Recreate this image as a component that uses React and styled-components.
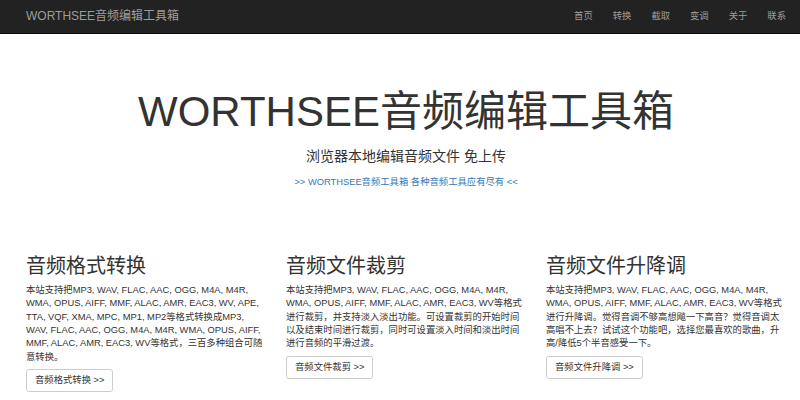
import React from "react";
import styled, { createGlobalStyle } from "styled-components";

const GlobalStyle = createGlobalStyle`
  html, body {
    margin: 0;
    padding: 0;
    background: #fff;
  }
  body {
    font-family: "Liberation Sans", "Noto Sans CJK SC", sans-serif;
    font-size: 9.33px;
    line-height: 13.33px;
    color: #333;
    overflow: hidden;
  }
  * {
    box-sizing: border-box;
  }
`;

const Container = styled.div`
  width: 780px;
  margin-left: 16px;
  padding: 0 10px;
`;

// top bar
const Navbar = styled.nav`
  height: 34px;
  background: #222;
  border-bottom: 1px solid #080808;
`;

const NavInner = styled(Container)`
  display: flex;
  justify-content: space-between;
  align-items: stretch;
  height: 100%;
`;

const Brand = styled.a`
  font-size: 12px;
  line-height: 13.33px;
  padding: 10px 0;
  color: #9d9d9d;
  text-decoration: none;
`;

const NavList = styled.ul`
  display: flex;
  list-style: none;
  margin: 0 -10px 0 0;
  padding: 0;
`;

const NavLink = styled.a`
  display: block;
  padding: 10px;
  line-height: 13.33px;
  color: #9d9d9d;
  text-decoration: none;
`;

// hero block
const Jumbotron = styled.header`
  padding: 42px 0 52px;
  text-align: center;
`;

const Title = styled.h1`
  margin: 13px 0 11px;
  font-size: 42px;
  line-height: 46px;
  font-weight: 400;
  color: #333;
`;

const Lead = styled.p`
  margin: 0 0 9px;
  font-size: 14px;
  line-height: 20px;
  font-weight: 400;
`;

const Tagline = styled.p`
  margin: 0 0 1px;
  font-size: 9.33px;
  line-height: 14px;

  a {
    color: #337ab7;
    text-decoration: none;
  }
`;

// feature columns
const Row = styled.div`
  display: grid;
  grid-template-columns: repeat(3, 1fr);
  margin: 0 -10px;
`;

const Column = styled.section`
  padding: 0 10px;
`;

const Heading = styled.h2`
  margin: 13px 0 7px;
  font-size: 20px;
  line-height: 22px;
  font-weight: 400;
`;

const Text = styled.p`
  margin: 0 0 5px;
`;

const Button = styled.a`
  display: inline-block;
  padding: 4px 8px;
  font-size: 9.33px;
  line-height: 13.33px;
  color: #333;
  background: #fff;
  border: 1px solid #ccc;
  border-radius: 2.67px;
  text-decoration: none;
`;

const navItems = ["首页", "转换", "截取", "变调", "关于", "联系"];

const features = [
  {
    title: "音频格式转换",
    text: "本站支持把MP3, WAV, FLAC, AAC, OGG, M4A, M4R, WMA, OPUS, AIFF, MMF, ALAC, AMR, EAC3, WV, APE, TTA, VQF, XMA, MPC, MP1, MP2等格式转换成MP3, WAV, FLAC, AAC, OGG, M4A, M4R, WMA, OPUS, AIFF, MMF, ALAC, AMR, EAC3, WV等格式，三百多种组合可随意转换。",
    button: "音频格式转换 >>",
  },
  {
    title: "音频文件裁剪",
    text: "本站支持把MP3, WAV, FLAC, AAC, OGG, M4A, M4R, WMA, OPUS, AIFF, MMF, ALAC, AMR, EAC3, WV等格式进行裁剪，并支持淡入淡出功能。可设置裁剪的开始时间以及结束时间进行裁剪，同时可设置淡入时间和淡出时间进行音频的平滑过渡。",
    button: "音频文件裁剪 >>",
  },
  {
    title: "音频文件升降调",
    text: "本站支持把MP3, WAV, FLAC, AAC, OGG, M4A, M4R, WMA, OPUS, AIFF, MMF, ALAC, AMR, EAC3, WV等格式进行升降调。觉得音调不够高想飚一下高音？觉得音调太高唱不上去？试试这个功能吧，选择您最喜欢的歌曲，升高/降低5个半音感受一下。",
    button: "音频文件升降调 >>",
  },
];

export default function App() {
  return (
    <>
      <GlobalStyle />
      <Navbar>
        <NavInner>
          <Brand href="#">WORTHSEE音频编辑工具箱</Brand>
          <NavList>
            {navItems.map((item) => (
              <li key={item}>
                <NavLink href="#">{item}</NavLink>
              </li>
            ))}
          </NavList>
        </NavInner>
      </Navbar>

      <Jumbotron>
        <Container>
          <Title>WORTHSEE音频编辑工具箱</Title>
          <Lead>浏览器本地编辑音频文件 免上传</Lead>
          <Tagline>
            <a href="#">&gt;&gt; WORTHSEE音频工具箱 各种音频工具应有尽有 &lt;&lt;</a>
          </Tagline>
        </Container>
      </Jumbotron>

      <Container>
        <Row>
          {features.map((f) => (
            <Column key={f.title}>
              <Heading>{f.title}</Heading>
              <Text>{f.text}</Text>
              <Button href="#">{f.button}</Button>
            </Column>
          ))}
        </Row>
      </Container>
    </>
  );
}
